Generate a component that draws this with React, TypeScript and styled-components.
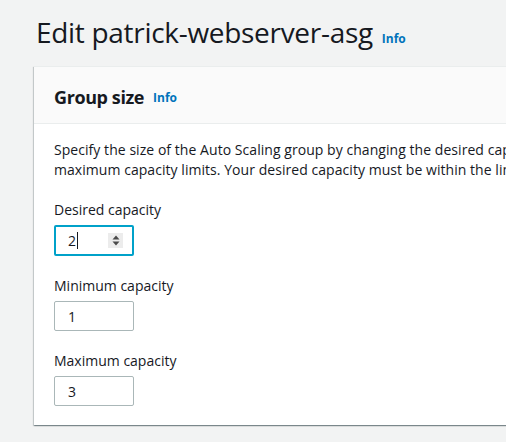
import React from "react";
import styled, { createGlobalStyle } from "styled-components";

const Global = createGlobalStyle`
  html, body { margin: 0; padding: 0; }
  body {
    background: #f2f3f3;
    font-family: "Open Sans", "Noto Sans", sans-serif;
    color: #16191f;
    overflow: hidden;
    width: 506px;
    height: 442px;
  }
`;

const Page = styled.div`
  padding: 12px 0 0 34px;
`;

const TitleRow = styled.div`
  display: flex;
  align-items: baseline;
  gap: 9px;
  padding-left: 2px;
  height: 40px;
`;

const Title = styled.h1`
  margin: 0;
  font-size: 28px;
  line-height: 40px;
  font-weight: 400;
  letter-spacing: -0.3px;
`;

const InfoLink = styled.a`
  color: #0073bb;
  font-size: 12px;
  font-weight: 700;
  text-decoration: none;
`;

const Card = styled.section`
  margin-top: 14px;
  width: 620px;
  background: #fff;
  box-shadow: 0 1px 1px 0 rgba(0, 28, 36, 0.3), 1px 1px 1px 0 rgba(0, 28, 36, 0.15),
    -1px 1px 1px 0 rgba(0, 28, 36, 0.15);
  border-top: 1px solid #eaeded;
`;

const CardHeader = styled.header`
  background: #fafafa;
  border-bottom: 1px solid #eaeded;
  height: 57px;
  display: flex;
  align-items: center;
  gap: 9px;
  padding: 4px 20px 0 20px;
  box-sizing: border-box;
`;

const CardTitle = styled.h2`
  margin: 0;
  font-size: 18px;
  font-weight: 700;
  letter-spacing: -0.4px;
`;

const CardBody = styled.div`
  padding: 16px 20px 19px 20px;
  display: flex;
  flex-direction: column;
`;

const Description = styled.p`
  margin: 0 0 20px 0;
  font-size: 14px;
  line-height: 20px;
  white-space: nowrap;
  letter-spacing: 0.05px;
`;

const Field = styled.div`
  display: flex;
  flex-direction: column;
  gap: 5px;
  & + & {
    margin-top: 20px;
  }
`;

const Label = styled.label`
  font-size: 14px;
  line-height: 20px;
`;

const InputBox = styled.div<{ $focused?: boolean }>`
  width: 80px;
  box-sizing: border-box;
  border: ${(p) => (p.$focused ? "2px solid #00a1c9" : "1px solid #aab7b8")};
  border-radius: 2px;
  display: flex;
  align-items: center;
  padding-left: ${(p) => (p.$focused ? "12px" : "13px")};
  padding-right: ${(p) => (p.$focused ? "9px" : "10px")};
  font-size: 14px;
  height: ${(p) => (p.$focused ? "31px" : "30px")};
`;

const Value = styled.span`
  flex: 1;
  display: flex;
  align-items: center;
`;

const Caret = styled.span`
  display: inline-block;
  width: 1px;
  height: 17px;
  background: #16191f;
  margin-left: 1px;
`;

const Spinner = styled.div`
  width: 15px;
  height: 15px;
  background: #ececec;
  display: flex;
  align-items: center;
  justify-content: center;
`;

function NumberInput({ value, focused }: { value: string; focused?: boolean }) {
  return (
    <InputBox $focused={focused}>
      <Value>
        {value}
        {focused && <Caret />}
      </Value>
      {focused && (
        <Spinner>
          <svg width="8" height="11" viewBox="0 0 8 11">
            <path d="M4 0.5 L7.5 4.5 H0.5 Z" fill="#4a4a4a" />
            <path d="M4 10.5 L7.5 6.5 H0.5 Z" fill="#4a4a4a" />
          </svg>
        </Spinner>
      )}
    </InputBox>
  );
}

export default function App() {
  return (
    <>
      <Global />
      <Page>
        <TitleRow>
          <Title>Edit patrick-webserver-asg</Title>
          <InfoLink href="#">Info</InfoLink>
        </TitleRow>
        <Card>
          <CardHeader>
            <CardTitle>Group size</CardTitle>
            <InfoLink href="#">Info</InfoLink>
          </CardHeader>
          <CardBody>
            <Description>
              Specify the size of the Auto Scaling group by changing the desired capacity. You can also specify minimum and
              <br />
              maximum capacity limits. Your desired capacity must be within the limit range.
            </Description>
            <Field>
              <Label>Desired capacity</Label>
              <NumberInput value="2" focused />
            </Field>
            <Field>
              <Label>Minimum capacity</Label>
              <NumberInput value="1" />
            </Field>
            <Field>
              <Label>Maximum capacity</Label>
              <NumberInput value="3" />
            </Field>
          </CardBody>
        </Card>
      </Page>
    </>
  );
}
